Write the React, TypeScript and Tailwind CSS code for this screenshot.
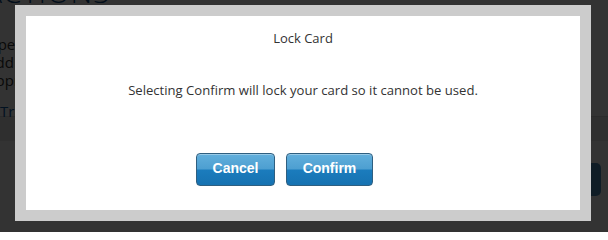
import React from 'react'

function ModalButton({ label, width }: { label: string; width: string }) {
  return (
    <button
      className={`${width} relative h-[33px] overflow-hidden rounded-[4px] border border-[#2f5f80] bg-[linear-gradient(to_bottom,#62afdc_0%,#4d9fd1_48%,#1b7cbd_52%,#1672b1_100%)] pb-[3px] text-[14px] font-bold text-white shadow-[inset_0_1px_0_rgba(255,255,255,0.35)]`}
      style={{ fontFamily: '"Liberation Sans", Arial, sans-serif' }}
    >
      {label}
    </button>
  )
}

export default function App() {
  return (
    <div
      className="relative h-[232px] w-[608px] overflow-hidden bg-white"
      style={{ fontFamily: '"Open Sans", "Noto Sans", sans-serif' }}
    >
      {/* page underneath the overlay */}
      <div className="-ml-[14px] h-[139px]">
        <h1 className="-mt-[23px] ml-[-2px] h-[30px] whitespace-nowrap text-[30px] font-light leading-[30px] tracking-wide text-[#0b4a86]">
          ACTIONS
        </h1>
        <div className="mt-[28px] text-[15px] leading-[18px] text-[#333]">
          <p>Open pending items</p>
          <p>Add to your list</p>
          <p>Approved</p>
        </div>
        <p className="mt-[13px] pl-[14px] text-[15px] leading-[18px] text-[#0b5aa6]">Transfer</p>
      </div>
      <div className="h-[25px] border-t border-[#d8d8d8] bg-[#ebebeb]" />
      <div className="mt-[22px] flex justify-end pr-[7px]">
        <div className="h-[33px] w-[80px] rounded-[5px] bg-[#4a8cbb]" />
      </div>

      {/* overlay */}
      <div className="absolute inset-0 bg-black/80" />

      {/* dialog */}
      <div className="absolute left-[15px] top-[5px] h-[216px] w-[576px] border-[11px] border-[#cccccc] bg-white">
        <div className="flex flex-col items-center pt-[13px] text-[13px] leading-[18px] text-[#333]">
          <h2 className="font-normal">Lock Card</h2>
          <p className="mt-[34px] text-[13.1px]">Selecting Confirm will lock your card so it cannot be used.</p>
        </div>
        <div className="mt-[54px] flex gap-[11px] pl-[170px]">
          <ModalButton label="Cancel" width="w-[79px]" />
          <ModalButton label="Confirm" width="w-[87px]" />
        </div>
      </div>
    </div>
  )
}
